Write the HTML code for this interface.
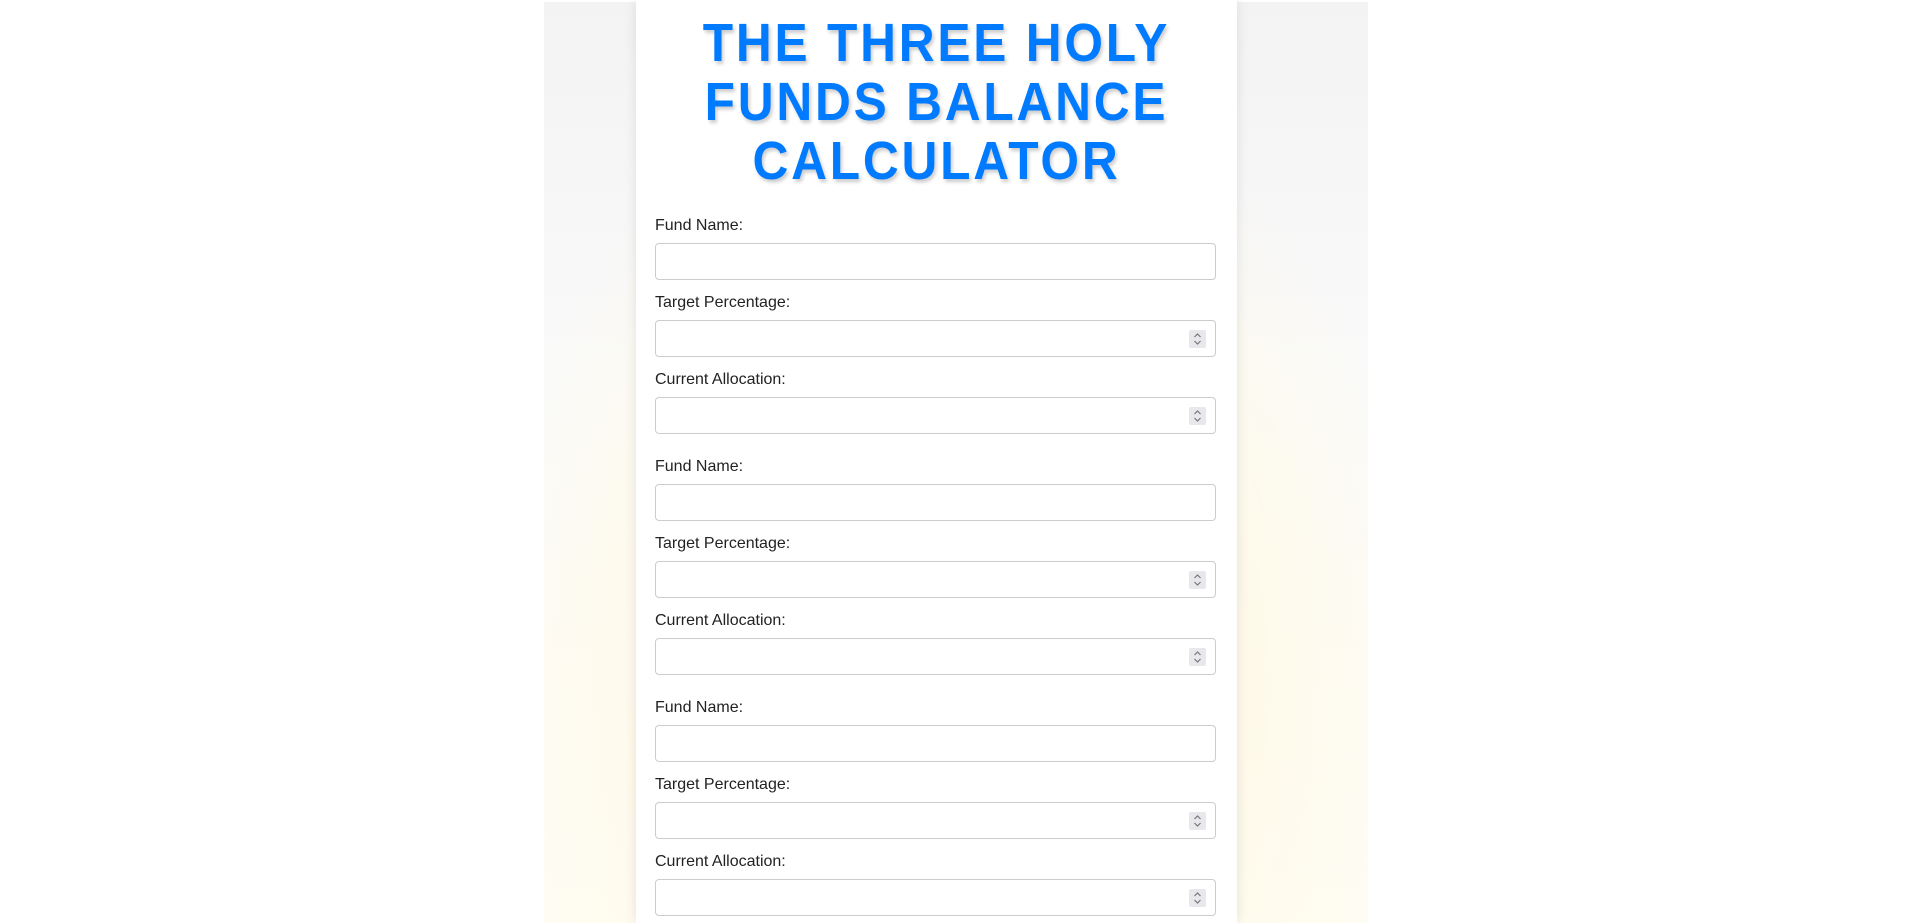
<!DOCTYPE html>
<html><head><meta charset="utf-8"><style>
html,body{margin:0;padding:0;width:1914px;height:923px;overflow:hidden;background:#fff;font-family:"Liberation Sans",Arial,sans-serif;position:relative;}
.bg{position:absolute;left:544px;top:2px;width:824px;height:921px;
background:radial-gradient(ellipse 480px 600px at 50% 72%, #fff4d4 0%, #fff9e6 50%, rgba(255,255,255,0) 100%), linear-gradient(#f3f3f3, #fafafa 40%, #fffdf5);}
.card{position:absolute;left:636px;top:0;width:601px;height:923px;background:#fff;box-shadow:0 0 12px rgba(0,0,0,0.10);overflow:hidden;}
h1{margin:0;position:absolute;top:14px;left:0;width:100%;text-align:center;color:#007bff;font-size:54px;line-height:59px;font-weight:bold;letter-spacing:3px;text-shadow:2px 3px 4px rgba(0,0,0,0.2);transform:scaleX(0.92);transform-origin:50% 0;}
.form{position:absolute;left:19px;top:216px;width:561px;}
label{display:block;height:19px;line-height:19px;font-size:16px;color:#222;margin-bottom:8px;}
.in{height:35px;border:1px solid #ccc;border-radius:4px;margin-bottom:13px;position:relative;background:#fff;}
.sp{position:absolute;right:9px;top:9px;width:17px;height:18px;background:#e8e8ec;border-radius:2px;}
.sp svg{display:block}
.gap{height:10px}
</style></head><body>
<div class="bg"></div>
<div class="card">
<h1>THE THREE HOLY<br>FUNDS BALANCE<br>CALCULATOR</h1>
<div class="form">
<label>Fund Name:</label><div class="in"></div>
<label>Target Percentage:</label><div class="in"><div class="sp"><svg width="17" height="18"><path d="M5.5 7 L8.5 4 L11.5 7 M5.5 11 L8.5 14 L11.5 11" fill="none" stroke="#777" stroke-width="1.2"/></svg></div></div>
<label>Current Allocation:</label><div class="in"><div class="sp"><svg width="17" height="18"><path d="M5.5 7 L8.5 4 L11.5 7 M5.5 11 L8.5 14 L11.5 11" fill="none" stroke="#777" stroke-width="1.2"/></svg></div></div>
<div class="gap"></div>
<label>Fund Name:</label><div class="in"></div>
<label>Target Percentage:</label><div class="in"><div class="sp"><svg width="17" height="18"><path d="M5.5 7 L8.5 4 L11.5 7 M5.5 11 L8.5 14 L11.5 11" fill="none" stroke="#777" stroke-width="1.2"/></svg></div></div>
<label>Current Allocation:</label><div class="in"><div class="sp"><svg width="17" height="18"><path d="M5.5 7 L8.5 4 L11.5 7 M5.5 11 L8.5 14 L11.5 11" fill="none" stroke="#777" stroke-width="1.2"/></svg></div></div>
<div class="gap"></div>
<label>Fund Name:</label><div class="in"></div>
<label>Target Percentage:</label><div class="in"><div class="sp"><svg width="17" height="18"><path d="M5.5 7 L8.5 4 L11.5 7 M5.5 11 L8.5 14 L11.5 11" fill="none" stroke="#777" stroke-width="1.2"/></svg></div></div>
<label>Current Allocation:</label><div class="in"><div class="sp"><svg width="17" height="18"><path d="M5.5 7 L8.5 4 L11.5 7 M5.5 11 L8.5 14 L11.5 11" fill="none" stroke="#777" stroke-width="1.2"/></svg></div></div>
</div>
</div>
</body></html>
